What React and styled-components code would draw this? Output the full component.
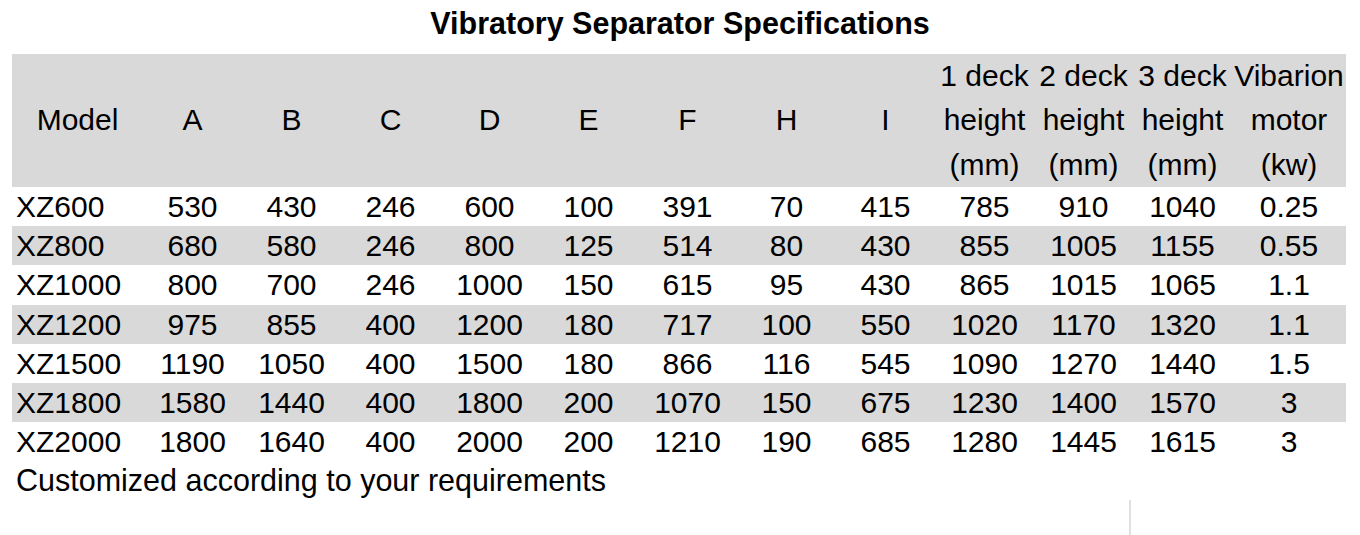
import styled, { createGlobalStyle } from "styled-components";

const GlobalStyle = createGlobalStyle`
  body {
    margin: 0;
    background: #fff;
    font-family: "Liberation Sans", Arial, sans-serif;
    color: #000;
  }
`;

const columns = [
  { key: "model", label: ["Model"] },
  { key: "a", label: ["A"] },
  { key: "b", label: ["B"] },
  { key: "c", label: ["C"] },
  { key: "d", label: ["D"] },
  { key: "e", label: ["E"] },
  { key: "f", label: ["F"] },
  { key: "h", label: ["H"] },
  { key: "i", label: ["I"] },
  { key: "deck1", label: ["1 deck", "height", "(mm)"] },
  { key: "deck2", label: ["2 deck", "height", "(mm)"] },
  { key: "deck3", label: ["3 deck", "height", "(mm)"] },
  { key: "motor", label: ["Vibarion", "motor", "(kw)"] },
];

const rows = [
  ["XZ600", "530", "430", "246", "600", "100", "391", "70", "415", "785", "910", "1040", "0.25"],
  ["XZ800", "680", "580", "246", "800", "125", "514", "80", "430", "855", "1005", "1155", "0.55"],
  ["XZ1000", "800", "700", "246", "1000", "150", "615", "95", "430", "865", "1015", "1065", "1.1"],
  ["XZ1200", "975", "855", "400", "1200", "180", "717", "100", "550", "1020", "1170", "1320", "1.1"],
  ["XZ1500", "1190", "1050", "400", "1500", "180", "866", "116", "545", "1090", "1270", "1440", "1.5"],
  ["XZ1800", "1580", "1440", "400", "1800", "200", "1070", "150", "675", "1230", "1400", "1570", "3"],
  ["XZ2000", "1800", "1640", "400", "2000", "200", "1210", "190", "685", "1280", "1445", "1615", "3"],
];

const Page = styled.div`
  width: 1360px;
  height: 535px;
  overflow: hidden;
`;

const Title = styled.h1`
  margin: 0 0 8px;
  height: 46px;
  line-height: 46px;
  text-align: center;
  font-size: 30.5px;
  font-weight: bold;
`;

const Table = styled.div`
  margin-left: 12px;
  width: 1334px;
  font-size: 30px;
`;

const Row = styled.div`
  display: grid;
  grid-template-columns: 131px repeat(11, 99px) 114px;
  height: ${(p) => (p.$head ? "133px" : "39.2px")};
  background: ${(p) => (p.$shaded ? "#d9d9d9" : "transparent")};
`;

const HeadCell = styled.div`
  display: flex;
  flex-direction: column;
  justify-content: center;
  align-items: center;
  line-height: 44.3px;
  white-space: nowrap;
`;

const Cell = styled.div`
  display: flex;
  align-items: center;
  justify-content: ${(p) => (p.$left ? "flex-start" : "center")};
  padding-left: ${(p) => (p.$left ? "4px" : "0")};
  line-height: 39px;
  white-space: nowrap;
`;

const Note = styled.div`
  margin-left: 16px;
  height: 39px;
  line-height: 39px;
  font-size: 30.5px;
`;

const Mark = styled.div`
  margin-left: 1129px;
  width: 2px;
  height: 36px;
  background: #e0e0e0;
`;

export default function App() {
  return (
    <Page>
      <GlobalStyle />
      <Title>Vibratory Separator Specifications</Title>
      <Table>
        <Row $head $shaded>
          {columns.map((col) => (
            <HeadCell key={col.key}>
              {col.label.map((line) => (
                <span key={line}>{line}</span>
              ))}
            </HeadCell>
          ))}
        </Row>
        {rows.map((row, idx) => (
          <Row key={row[0]} $shaded={idx % 2 === 1}>
            {row.map((val, i) => (
              <Cell key={columns[i].key} $left={i === 0}>
                {val}
              </Cell>
            ))}
          </Row>
        ))}
      </Table>
      <Note>Customized according to your requirements</Note>
      <Mark />
    </Page>
  );
}
